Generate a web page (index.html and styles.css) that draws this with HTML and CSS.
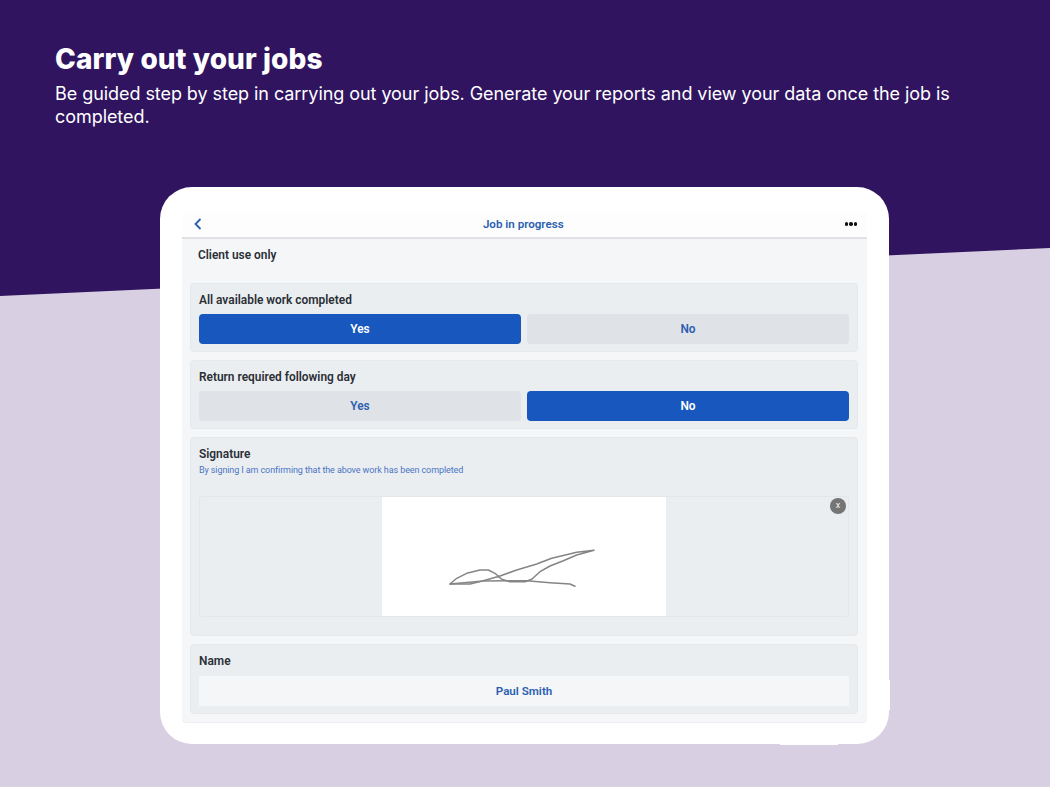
FILE: index.html
```html
<!DOCTYPE html>
<html lang="en">
<head>
<meta charset="utf-8">
<title>Carry out your jobs</title>
<link rel="stylesheet" href="styles.css">
</head>
<body>
<div class="page">
  <svg class="backdrop" viewBox="0 0 1050 787" aria-hidden="true"><polygon points="0,296 1050,248 1050,787 0,787"/></svg>
  <header class="intro">
    <h1>Carry out your jobs</h1>
    <p>Be guided step by step in carrying out your jobs. Generate your reports and view your data once the job is completed.</p>
  </header>
  <div class="tablet">
    <span class="bump bump-right"></span>
    <span class="bump bump-bottom"></span>
    <main class="screen">
      <nav class="nav">
        <svg class="back" viewBox="0 0 8 12" aria-hidden="true"><path d="M6.5 1 1.5 6l5 5"/></svg>
        <span class="nav-title">Job in progress</span>
        <span class="dots"><i></i><i></i><i></i></span>
      </nav>
      <div class="section-title">Client use only</div>
      <div class="cards">
        <section class="card">
          <h2>All available work completed</h2>
          <div class="choices">
            <button class="choice on">Yes</button>
            <button class="choice">No</button>
          </div>
        </section>
        <section class="card">
          <h2>Return required following day</h2>
          <div class="choices">
            <button class="choice">Yes</button>
            <button class="choice on">No</button>
          </div>
        </section>
        <section class="card sig-card">
          <h2>Signature</h2>
          <p class="hint">By signing I am confirming that the above work has been completed</p>
          <div class="sig-box">
            <div class="sig-paper">
              <svg viewBox="382 497 284 119" aria-hidden="true">
                <polyline points="450,584 456.7,578.3 466.7,573.3 480,570 488.3,570 495,573.3 501.7,579.3 510,581.7 525,581.7 531.7,579.3 540,571.7 550,566 563.3,560.7 576.7,555 594,550.3 576.7,552.3 551.7,558.3 536.7,564 516.7,570 500,576 483.3,580.7 470,584 450,584"/>
                <polyline points="450,584 483.3,581 526.7,580.7 550,582.7 570,584 575,586.3"/>
              </svg>
            </div>
            <span class="clear">x</span>
          </div>
        </section>
        <section class="card name-card">
          <h2>Name</h2>
          <div class="name-field">Paul Smith</div>
        </section>
      </div>
    </main>
  </div>
</div>
</body>
</html>
```
FILE: styles.css
```css
* { box-sizing: border-box; }
html, body { margin: 0; padding: 0; }
body { background: #30145f; font-family: Roboto, "Noto Sans", sans-serif; }
.page { position: relative; width: 1050px; height: 787px; overflow: hidden; background: #30145f; }
.backdrop { position: absolute; inset: 0; width: 1050px; height: 787px; }
.backdrop polygon { fill: #d8d0e2; }
.intro { position: relative; height: 187px; padding: 42px 90px 0 55px; color: #fff; font-family: Inter, sans-serif; }
.intro h1 { margin: 0 0 6px; font-size: 28px; line-height: 34px; font-weight: 800; letter-spacing: 0.1px; }
.intro p { margin: 0; font-size: 18px; line-height: 23px; font-weight: 400; letter-spacing: -0.06px; }
.tablet { position: relative; width: 729px; height: 557px; margin-left: 160px; padding: 26px 22px 22px; background: #fff; border-radius: 32px; }
.bump { position: absolute; background: #fff; }
.bump-right { left: 729px; top: 493px; width: 1px; height: 30px; }
.bump-bottom { left: 620px; top: 557px; width: 58px; height: 1px; }
.screen { height: 509px; background: #f5f6f8; border-radius: 0 0 4px 4px; box-shadow: 0 1px 0 #eceef1; overflow: hidden; }
.nav { display: flex; align-items: center; justify-content: space-between; height: 26px; padding: 0 10px 2px 12px; background: #fdfdfe; border-bottom: 2px solid #dfe1e4; }
.back { width: 8px; height: 12px; fill: none; stroke: #2b5fb0; stroke-width: 1.8; }
.nav-title { color: #2b5fb0; font-size: 11.6px; font-weight: 600; }
.dots { display: flex; gap: 1px; }
.dots i { width: 3.5px; height: 3.5px; border-radius: 50%; background: #111; }
.section-title { height: 44px; padding: 8px 16px 0; color: #2a2f36; font-size: 11.9px; line-height: 16px; font-weight: 600; }
.cards { display: flex; flex-direction: column; gap: 8px; padding: 0 9px 0 8px; }
.card { padding: 8px 8px 7px; background: #ebeef1; border: 1px solid #e6e9ec; border-radius: 4px; }
.card h2 { margin: 0 0 6px; color: #2a2f36; font-size: 11.9px; line-height: 16px; font-weight: 600; }
.choices { display: flex; gap: 6px; }
.choice { flex: 1; height: 30px; padding: 0 0 1px; border: 0; border-radius: 4px; background: #dfe2e7; color: #2b5fb0; font: 600 11.9px Roboto, sans-serif; }
.choice.on { background: #1857bd; color: #fff; }
.sig-card { height: 199px; }
.sig-card h2 { margin-bottom: 2px; }
.hint { margin: 0 0 19px; color: #4a74c4; font-size: 9px; line-height: 13px; letter-spacing: -0.1px; }
.sig-box { position: relative; display: flex; justify-content: center; height: 121px; border: 1px solid #e4e7ea; border-radius: 3px; }
.sig-paper { width: 284px; height: 119px; background: #fff; }
.sig-paper svg { display: block; width: 284px; height: 119px; fill: none; stroke: #858585; stroke-width: 1.5; stroke-linejoin: round; stroke-linecap: round; }
.clear { position: absolute; top: 1px; right: 2px; width: 16px; height: 16px; border-radius: 50%; background: #757575; color: #f2f2f2; font-size: 9px; line-height: 15px; text-align: center; }
.name-card h2 { margin-bottom: 7px; }
.name-field { height: 30px; background: #f5f6f8; color: #2b5fb0; font-size: 11.6px; line-height: 30px; font-weight: 600; text-align: center; }
```
